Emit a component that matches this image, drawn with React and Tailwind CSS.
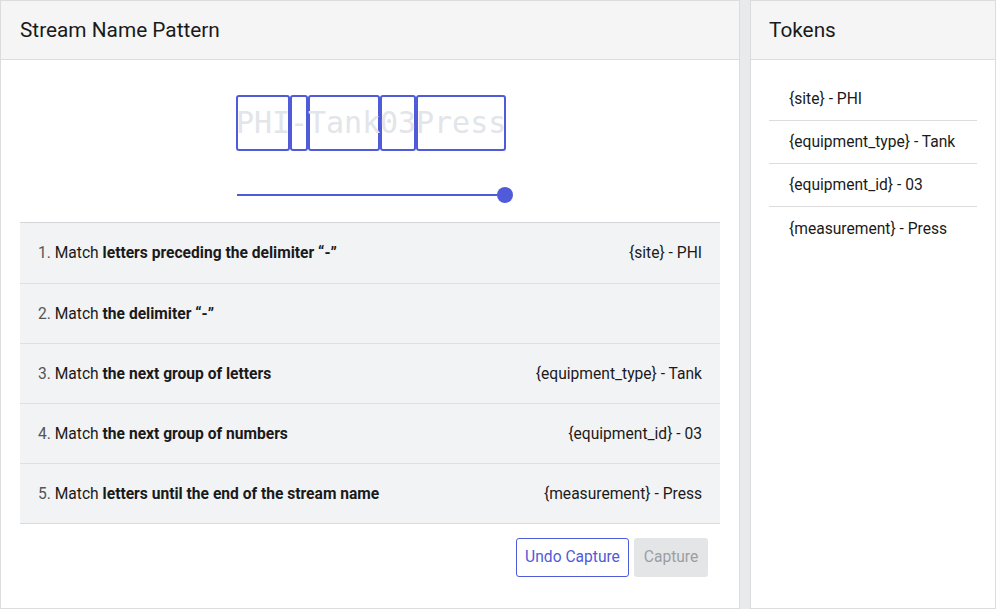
import React from "react";

const segments = [
  { text: "PHI" },
  { text: "-" },
  { text: "Tank" },
  { text: "03" },
  { text: "Press" },
];

const steps = [
  { n: 1, bold: "letters preceding the delimiter “-”", token: "{site} - PHI" },
  { n: 2, bold: "the delimiter “-”", token: "" },
  { n: 3, bold: "the next group of letters", token: "{equipment_type} - Tank" },
  { n: 4, bold: "the next group of numbers", token: "{equipment_id} - 03" },
  { n: 5, bold: "letters until the end of the stream name", token: "{measurement} - Press" },
];

const tokens = [
  "{site} - PHI",
  "{equipment_type} - Tank",
  "{equipment_id} - 03",
  "{measurement} - Press",
];

function App() {
  return (
    <div
      className="flex h-[609px] w-[996px] gap-[10px] bg-[#e8eaec] text-[#1a1a1a]"
      style={{ fontFamily: "Roboto, 'Liberation Sans', sans-serif" }}
    >
      <section className="flex w-[740px] flex-col border border-[#dcdcdc] bg-white">
        <div className="flex h-[59px] items-center border-b border-[#dcdcdc] bg-[#f5f5f5] px-[19px] pt-[2px]">
          <h2 className="text-[20.8px] font-normal">Stream Name Pattern</h2>
        </div>

        <div className="flex flex-col items-center pt-[35px]">
          <div
            className="ml-[2px] flex h-[56px] text-[30px] leading-[56px] text-[#e2e5e9]"
            style={{ fontFamily: "'DejaVu Sans Mono', 'Liberation Mono', monospace" }}
          >
            {segments.map((s, i) => (
              <span
                key={i}
                className="inline-block h-[56px] rounded-[3px] shadow-[inset_0_0_0_2px_#4f5bd9]"
                style={{ width: `${s.text.length * 18}px` }}
              >
                {s.text}
              </span>
            ))}
          </div>
          <div className="ml-[10px] mt-[36px] flex w-[276px] items-center">
            <div className="h-[2px] flex-1 bg-[#4f5bd9]" />
            <div className="-ml-[4px] h-[16px] w-[16px] rounded-full bg-[#4f5bd9]" />
          </div>
        </div>

        <div className="mx-[19px] mt-[19px] border-t border-[#d3d5d8] border-b border-b-[#d9dbde] bg-[#f2f3f5]">
          {steps.map((s, i) => (
            <div
              key={s.n}
              className={
                "flex h-[60px] items-center justify-between px-[18px] pt-[2px] text-[15.6px] " +
                (i > 0 ? "border-t border-[#dfe0e2]" : "")
              }
            >
              <span>
                <span className="text-[#555]">{s.n}. </span>Match{" "}
                <span className="font-bold">{s.bold}</span>
              </span>
              <span>{s.token}</span>
            </div>
          ))}
        </div>

        <div className="mr-[31px] mt-[14px] flex justify-end gap-[5px]">
          <button className="h-[39px] w-[113px] rounded-[3px] border border-[#4f5bd9] bg-white text-[15.6px] text-[#4f5bd9]">
            Undo Capture
          </button>
          <button className="h-[39px] w-[74px] rounded-[3px] bg-[#e4e5e7] text-[15.6px] text-[#9b9ea3]">
            Capture
          </button>
        </div>
      </section>

      <section className="flex flex-1 flex-col border border-[#dcdcdc] bg-white">
        <div className="flex h-[59px] items-center border-b border-[#dcdcdc] bg-[#f5f5f5] px-[18px] pt-[2px]">
          <h2 className="text-[20.8px] font-normal">Tokens</h2>
        </div>
        <ul className="mx-[18px] mt-[18px]">
          {tokens.map((t, i) => (
            <li
              key={t}
              className={
                "flex h-[43px] items-center px-[20px] pt-[2px] text-[15.6px] " +
                (i < tokens.length - 1 ? "border-b border-[#dcdcdc]" : "")
              }
            >
              {t}
            </li>
          ))}
        </ul>
      </section>
    </div>
  );
}

export default App;
